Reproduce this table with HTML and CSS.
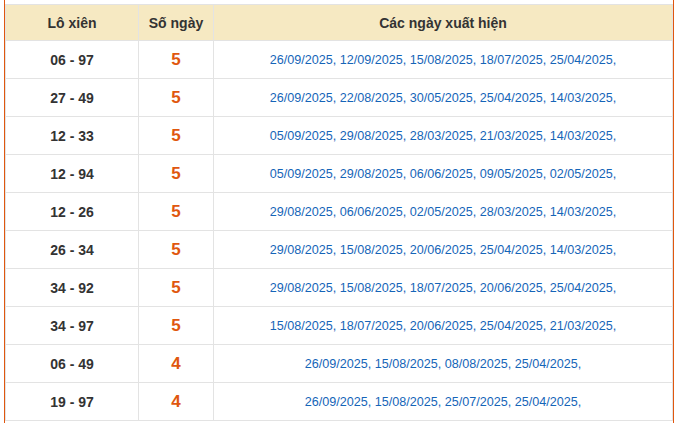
FILE: index.html
```html
<!DOCTYPE html>
<html lang="vi">
<head>
<meta charset="utf-8">
<link rel="stylesheet" href="styles.css">
</head>
<body>
<div class="wrap">
  <table class="tbl">
    <thead>
      <tr><th class="c1">Lô xiên</th><th class="c2">Số ngày</th><th class="c3">Các ngày xuất hiện</th></tr>
    </thead>
    <tbody>
      <tr><td class="pair">06 - 97</td><td class="cnt">5</td><td class="dates">26/09/2025, 12/09/2025, 15/08/2025, 18/07/2025, 25/04/2025,</td></tr>
      <tr><td class="pair">27 - 49</td><td class="cnt">5</td><td class="dates">26/09/2025, 22/08/2025, 30/05/2025, 25/04/2025, 14/03/2025,</td></tr>
      <tr><td class="pair">12 - 33</td><td class="cnt">5</td><td class="dates">05/09/2025, 29/08/2025, 28/03/2025, 21/03/2025, 14/03/2025,</td></tr>
      <tr><td class="pair">12 - 94</td><td class="cnt">5</td><td class="dates">05/09/2025, 29/08/2025, 06/06/2025, 09/05/2025, 02/05/2025,</td></tr>
      <tr><td class="pair">12 - 26</td><td class="cnt">5</td><td class="dates">29/08/2025, 06/06/2025, 02/05/2025, 28/03/2025, 14/03/2025,</td></tr>
      <tr><td class="pair">26 - 34</td><td class="cnt">5</td><td class="dates">29/08/2025, 15/08/2025, 20/06/2025, 25/04/2025, 14/03/2025,</td></tr>
      <tr><td class="pair">34 - 92</td><td class="cnt">5</td><td class="dates">29/08/2025, 15/08/2025, 18/07/2025, 20/06/2025, 25/04/2025,</td></tr>
      <tr><td class="pair">34 - 97</td><td class="cnt">5</td><td class="dates">15/08/2025, 18/07/2025, 20/06/2025, 25/04/2025, 21/03/2025,</td></tr>
      <tr><td class="pair">06 - 49</td><td class="cnt">4</td><td class="dates">26/09/2025, 15/08/2025, 08/08/2025, 25/04/2025,</td></tr>
      <tr><td class="pair">19 - 97</td><td class="cnt">4</td><td class="dates">26/09/2025, 15/08/2025, 25/07/2025, 25/04/2025,</td></tr>
    </tbody>
  </table>
</div>
</body>
</html>
```
FILE: styles.css
```css
html, body {
  margin: 0;
  padding: 0;
  background: #fff;
  overflow: hidden;
}
body {
  font-family: "Liberation Sans", Arial, sans-serif;
  color: #333;
}
.wrap {
  margin-left: 4px;
  width: 668px;
  border-left: 1px solid #e0570f;
  border-right: 1px solid #e0570f;
  padding-top: 4px;
  min-height: 430px;
}
.tbl {
  width: 100%;
  border-collapse: collapse;
  table-layout: fixed;
  border: 1px solid #e3e3e3;
}
.tbl th, .tbl td {
  border: 1px solid #e3e3e3;
  text-align: center;
  vertical-align: middle;
  padding: 0;
}
.tbl th {
  background: #f6e9c2;
  height: 35px;
  font-size: 14px;
  font-weight: bold;
  color: #333;
}
.c1 { width: 132px; }
.c2 { width: 74px; }
.tbl td { height: 37px; }
.pair {
  font-size: 14px;
  font-weight: bold;
  color: #333;
}
.cnt {
  font-size: 17px;
  font-weight: bold;
  color: #e0570f;
}
.dates {
  font-size: 12.6px;
  color: #1565b8;
}
```
